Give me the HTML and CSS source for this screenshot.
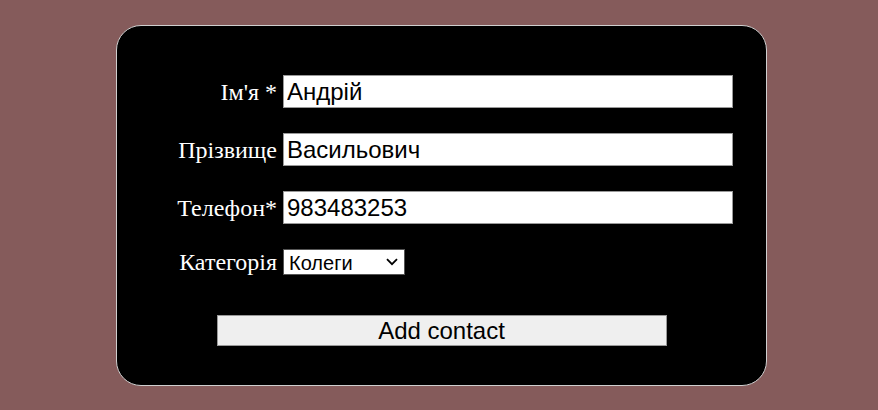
FILE: index.html
```html
<!DOCTYPE html>
<html>
<head>
<meta charset="utf-8">
<link rel="stylesheet" href="styles.css">
</head>
<body>
<div class="card">
  <form class="form">
    <label class="lbl" for="fn">Ім'я *</label>
    <input class="inp" id="fn" type="text" value="Андрій">
    <label class="lbl" for="ln">Прізвище</label>
    <input class="inp" id="ln" type="text" value="Васильович">
    <label class="lbl" for="ph">Телефон*</label>
    <input class="inp" id="ph" type="text" value="983483253">
    <label class="lbl lbl-sel" for="cat">Категорія</label>
    <div class="selwrap">
      <select class="sel" id="cat">
        <option>Колеги</option>
        <option>Друзі</option>
        <option>Родина</option>
      </select>
      <svg class="chev" width="12" height="8" viewBox="0 0 12 8" aria-hidden="true"><path d="M1 1.2 L6 6.2 L11 1.2" fill="none" stroke="#000" stroke-width="1.8"/></svg>
    </div>
  </form>
  <div class="actions">
    <button class="btn" type="button">Add contact</button>
  </div>
</div>
</body>
</html>
```

FILE: styles.css
```css
html, body {
  margin: 0;
  padding: 0;
  background: #855b5b;
}
body {
  width: 878px;
  height: 410px;
  overflow: hidden;
}
.card {
  box-sizing: border-box;
  margin: 25px 0 0 116px;
  width: 651px;
  height: 361px;
  background: #000;
  border: 1px solid #cfcfcf;
  border-radius: 25px;
  padding: 49px 0 0 0;
}
.form {
  display: grid;
  grid-template-columns: 160px 450px;
  column-gap: 6px;
  row-gap: 25px;
  align-items: center;
}
.lbl {
  color: #fff;
  font-family: "Liberation Serif", serif;
  font-size: 24px;
  line-height: 1;
  text-align: right;
  white-space: nowrap;
}
.inp {
  box-sizing: border-box;
  width: 450px;
  height: 33px;
  margin: 0;
  padding: 1px 3px;
  border: 1px solid #999;
  background: #fff;
  color: #000;
  font-family: "Liberation Sans", Arial, sans-serif;
  font-size: 24px;
  outline: none;
}
.selwrap {
  position: relative;
  display: flex;
  width: 122px;
}
.sel {
  box-sizing: border-box;
  -webkit-appearance: none;
  appearance: none;
  width: 122px;
  height: 26px;
  margin: 0;
  padding: 2px 0 0 5px;
  border: 1px solid #555;
  border-radius: 0;
  background: #fff;
  color: #000;
  font-family: "Liberation Sans", Arial, sans-serif;
  font-size: 20px;
  line-height: 22px;
}
.chev {
  position: absolute;
  left: 103px;
  top: 9px;
  pointer-events: none;
}
.actions {
  display: flex;
  justify-content: center;
  padding-top: 40px;
}
.btn {
  box-sizing: border-box;
  width: 450px;
  height: 31px;
  margin: 0;
  padding: 0;
  border: 1px solid #999;
  border-radius: 0;
  background: #efefef;
  color: #000;
  font-family: "Liberation Sans", Arial, sans-serif;
  font-size: 24px;
  line-height: 1;
}
```
